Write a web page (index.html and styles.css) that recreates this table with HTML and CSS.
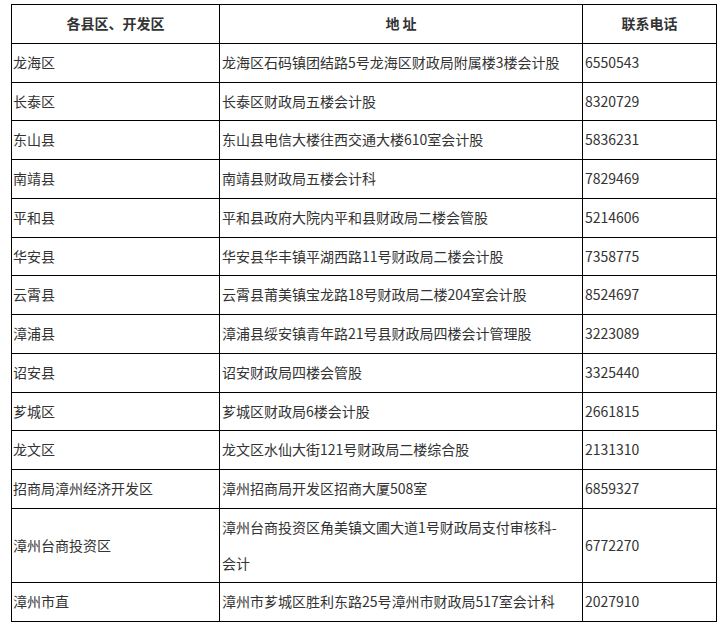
FILE: index.html
```html
<!DOCTYPE html>
<html lang="zh-CN">
<head>
<meta charset="utf-8">
<link rel="stylesheet" href="styles.css">
</head>
<body>
<div class="wrap">
<table class="contacts">
  <colgroup>
    <col class="c1"><col class="c2"><col class="c3">
  </colgroup>
  <thead>
    <tr><th>各县区、开发区</th><th>地 址</th><th>联系电话</th></tr>
  </thead>
  <tbody>
    <tr><td>龙海区</td><td>龙海区石码镇团结路5号龙海区财政局附属楼3楼会计股</td><td>6550543</td></tr>
    <tr><td>长泰区</td><td>长泰区财政局五楼会计股</td><td>8320729</td></tr>
    <tr><td>东山县</td><td>东山县电信大楼往西交通大楼610室会计股</td><td>5836231</td></tr>
    <tr><td>南靖县</td><td>南靖县财政局五楼会计科</td><td>7829469</td></tr>
    <tr><td>平和县</td><td>平和县政府大院内平和县财政局二楼会管股</td><td>5214606</td></tr>
    <tr><td>华安县</td><td>华安县华丰镇平湖西路11号财政局二楼会计股</td><td>7358775</td></tr>
    <tr><td>云霄县</td><td>云霄县莆美镇宝龙路18号财政局二楼204室会计股</td><td>8524697</td></tr>
    <tr><td>漳浦县</td><td>漳浦县绥安镇青年路21号县财政局四楼会计管理股</td><td>3223089</td></tr>
    <tr><td>诏安县</td><td>诏安财政局四楼会管股</td><td>3325440</td></tr>
    <tr><td>芗城区</td><td>芗城区财政局6楼会计股</td><td>2661815</td></tr>
    <tr><td>龙文区</td><td>龙文区水仙大街121号财政局二楼综合股</td><td>2131310</td></tr>
    <tr><td>招商局漳州经济开发区</td><td>漳州招商局开发区招商大厦508室</td><td>6859327</td></tr>
    <tr class="spaced"><td>漳州台商投资区</td><td>漳州台商投资区角美镇文圃大道1号财政局支付审核科-<br>会计</td><td>6772270</td></tr>
    <tr class="spaced"><td>漳州市直</td><td>漳州市芗城区胜利东路25号漳州市财政局517室会计科</td><td>2027910</td></tr>
  </tbody>
</table>
</div>
</body>
</html>
```

FILE: styles.css
```css
html, body {
  margin: 0;
  padding: 0;
  background: #fff;
}

.wrap {
  padding: 4px 10px 0 11px;
}

.contacts {
  border-collapse: collapse;
  width: 705px;
  table-layout: fixed;
  font-family: "Noto Sans CJK SC", "Noto Sans", sans-serif;
  font-size: 14px;
  color: #333;
}

.c1 { width: 208px; }
.c2 { width: 363px; }
.c3 { width: 134px; }

.contacts th,
.contacts td {
  border: 1px solid #000;
  padding: 1px 0 1px 2px;
  line-height: 35.75px;
  vertical-align: middle;
  text-align: left;
  white-space: nowrap;
}

.contacts th {
  font-weight: bold;
  text-align: center;
  color: #333;
  padding-left: 0;
}

.contacts td:first-child {
  padding-left: 1px;
}
```
